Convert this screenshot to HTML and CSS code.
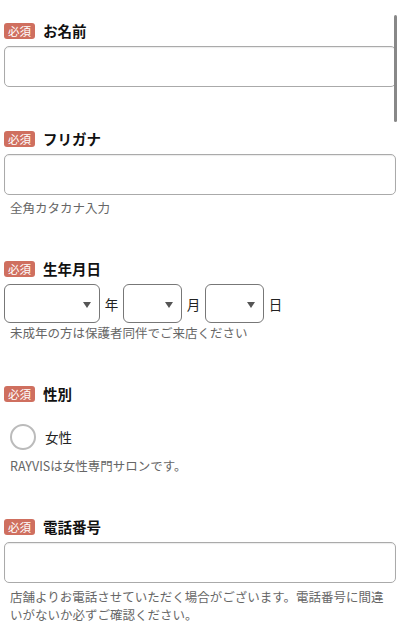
FILE: index.html
```html
<!DOCTYPE html>
<html lang="ja">
<head>
<meta charset="utf-8">
<link rel="stylesheet" href="styles.css">
</head>
<body>
<div class="scrollbar"></div>
<form class="form">
  <div class="field">
    <div class="label"><span class="req">必須</span><span class="title">お名前</span></div>
    <div class="input"></div>
  </div>
  <div class="field">
    <div class="label"><span class="req">必須</span><span class="title">フリガナ</span></div>
    <div class="input"></div>
    <p class="hint">全角カタカナ入力</p>
  </div>
  <div class="field">
    <div class="label"><span class="req">必須</span><span class="title">生年月日</span></div>
    <div class="dates">
      <div class="select sel-year"><span class="arrow"></span></div><span class="unit">年</span>
      <div class="select sel-month"><span class="arrow"></span></div><span class="unit">月</span>
      <div class="select sel-day"><span class="arrow"></span></div><span class="unit">日</span>
    </div>
    <p class="hint hint-tight">未成年の方は保護者同伴でご来店ください</p>
  </div>
  <div class="field">
    <div class="label"><span class="req">必須</span><span class="title">性別</span></div>
    <div class="radio-row"><span class="radio"></span><span class="radio-text">女性</span></div>
    <p class="hint hint-radio">RAYVISは女性専門サロンです。</p>
  </div>
  <div class="field field-last">
    <div class="label"><span class="req">必須</span><span class="title">電話番号</span></div>
    <div class="input"></div>
    <p class="hint hint-wide">店舗よりお電話させていただく場合がございます。電話番号に間違いがないか必ずご確認ください。</p>
  </div>
</form>
</body>
</html>
```
FILE: styles.css
```css
html, body {
  margin: 0;
  padding: 0;
  background: #ffffff;
}
body {
  font-family: "Noto Sans CJK JP", "Noto Sans", sans-serif;
  color: #111;
  overflow: hidden;
  height: 629px;
  position: relative;
}
.scrollbar {
  position: absolute;
  right: 3px;
  top: 15px;
  width: 3px;
  height: 107px;
  border-radius: 2px;
  background: #888;
}
.form {
  padding: 20px 4px 0 4px;
}
.field {
  margin-bottom: 41px;
}
.field-last {
  margin-bottom: 0;
}
.label {
  height: 22px;
  display: flex;
  align-items: center;
  gap: 8px;
  margin-bottom: 4px;
}
.req {
  display: inline-flex;
  align-items: center;
  justify-content: center;
  width: 31px;
  height: 16px;
  border-radius: 3px;
  background: #cf6f5f;
  color: #fff;
  font-size: 11.5px;
  line-height: 16px;
}
.title {
  font-size: 14.5px;
  font-weight: bold;
  line-height: 22px;
}
.input {
  height: 39px;
  border: 1px solid #aaa;
  border-radius: 5px;
  box-shadow: inset 0 1px 1px rgba(0,0,0,0.08);
}
.hint {
  margin: 4px 0 0 0;
  padding: 0 6px;
  font-size: 12.5px;
  line-height: 18px;
  color: #666;
}
.hint-tight {
  margin-top: 1px;
}
.hint-radio {
  margin-top: 7px;
}
.hint-wide {
  margin-top: 5px;
}
.dates {
  display: flex;
  align-items: center;
}
.select {
  height: 37px;
  border: 1px solid #777;
  border-radius: 6px;
  position: relative;
}
.sel-year { width: 94px; }
.sel-month { width: 57px; }
.sel-day { width: 57px; }
.arrow {
  position: absolute;
  right: 8px;
  top: 17px;
  width: 0;
  height: 0;
  border-left: 4px solid transparent;
  border-right: 4px solid transparent;
  border-top: 6px solid #555;
}
.unit {
  font-size: 13.5px;
  width: 23px;
  text-align: center;
  color: #222;
}
.radio-row {
  display: flex;
  align-items: center;
  height: 26px;
  margin-top: 19px;
  padding-left: 6px;
}
.radio {
  width: 22px;
  height: 22px;
  border: 2px solid #bbb;
  border-radius: 50%;
}
.radio-text {
  margin-left: 9px;
  font-size: 13.5px;
  color: #222;
}
```
